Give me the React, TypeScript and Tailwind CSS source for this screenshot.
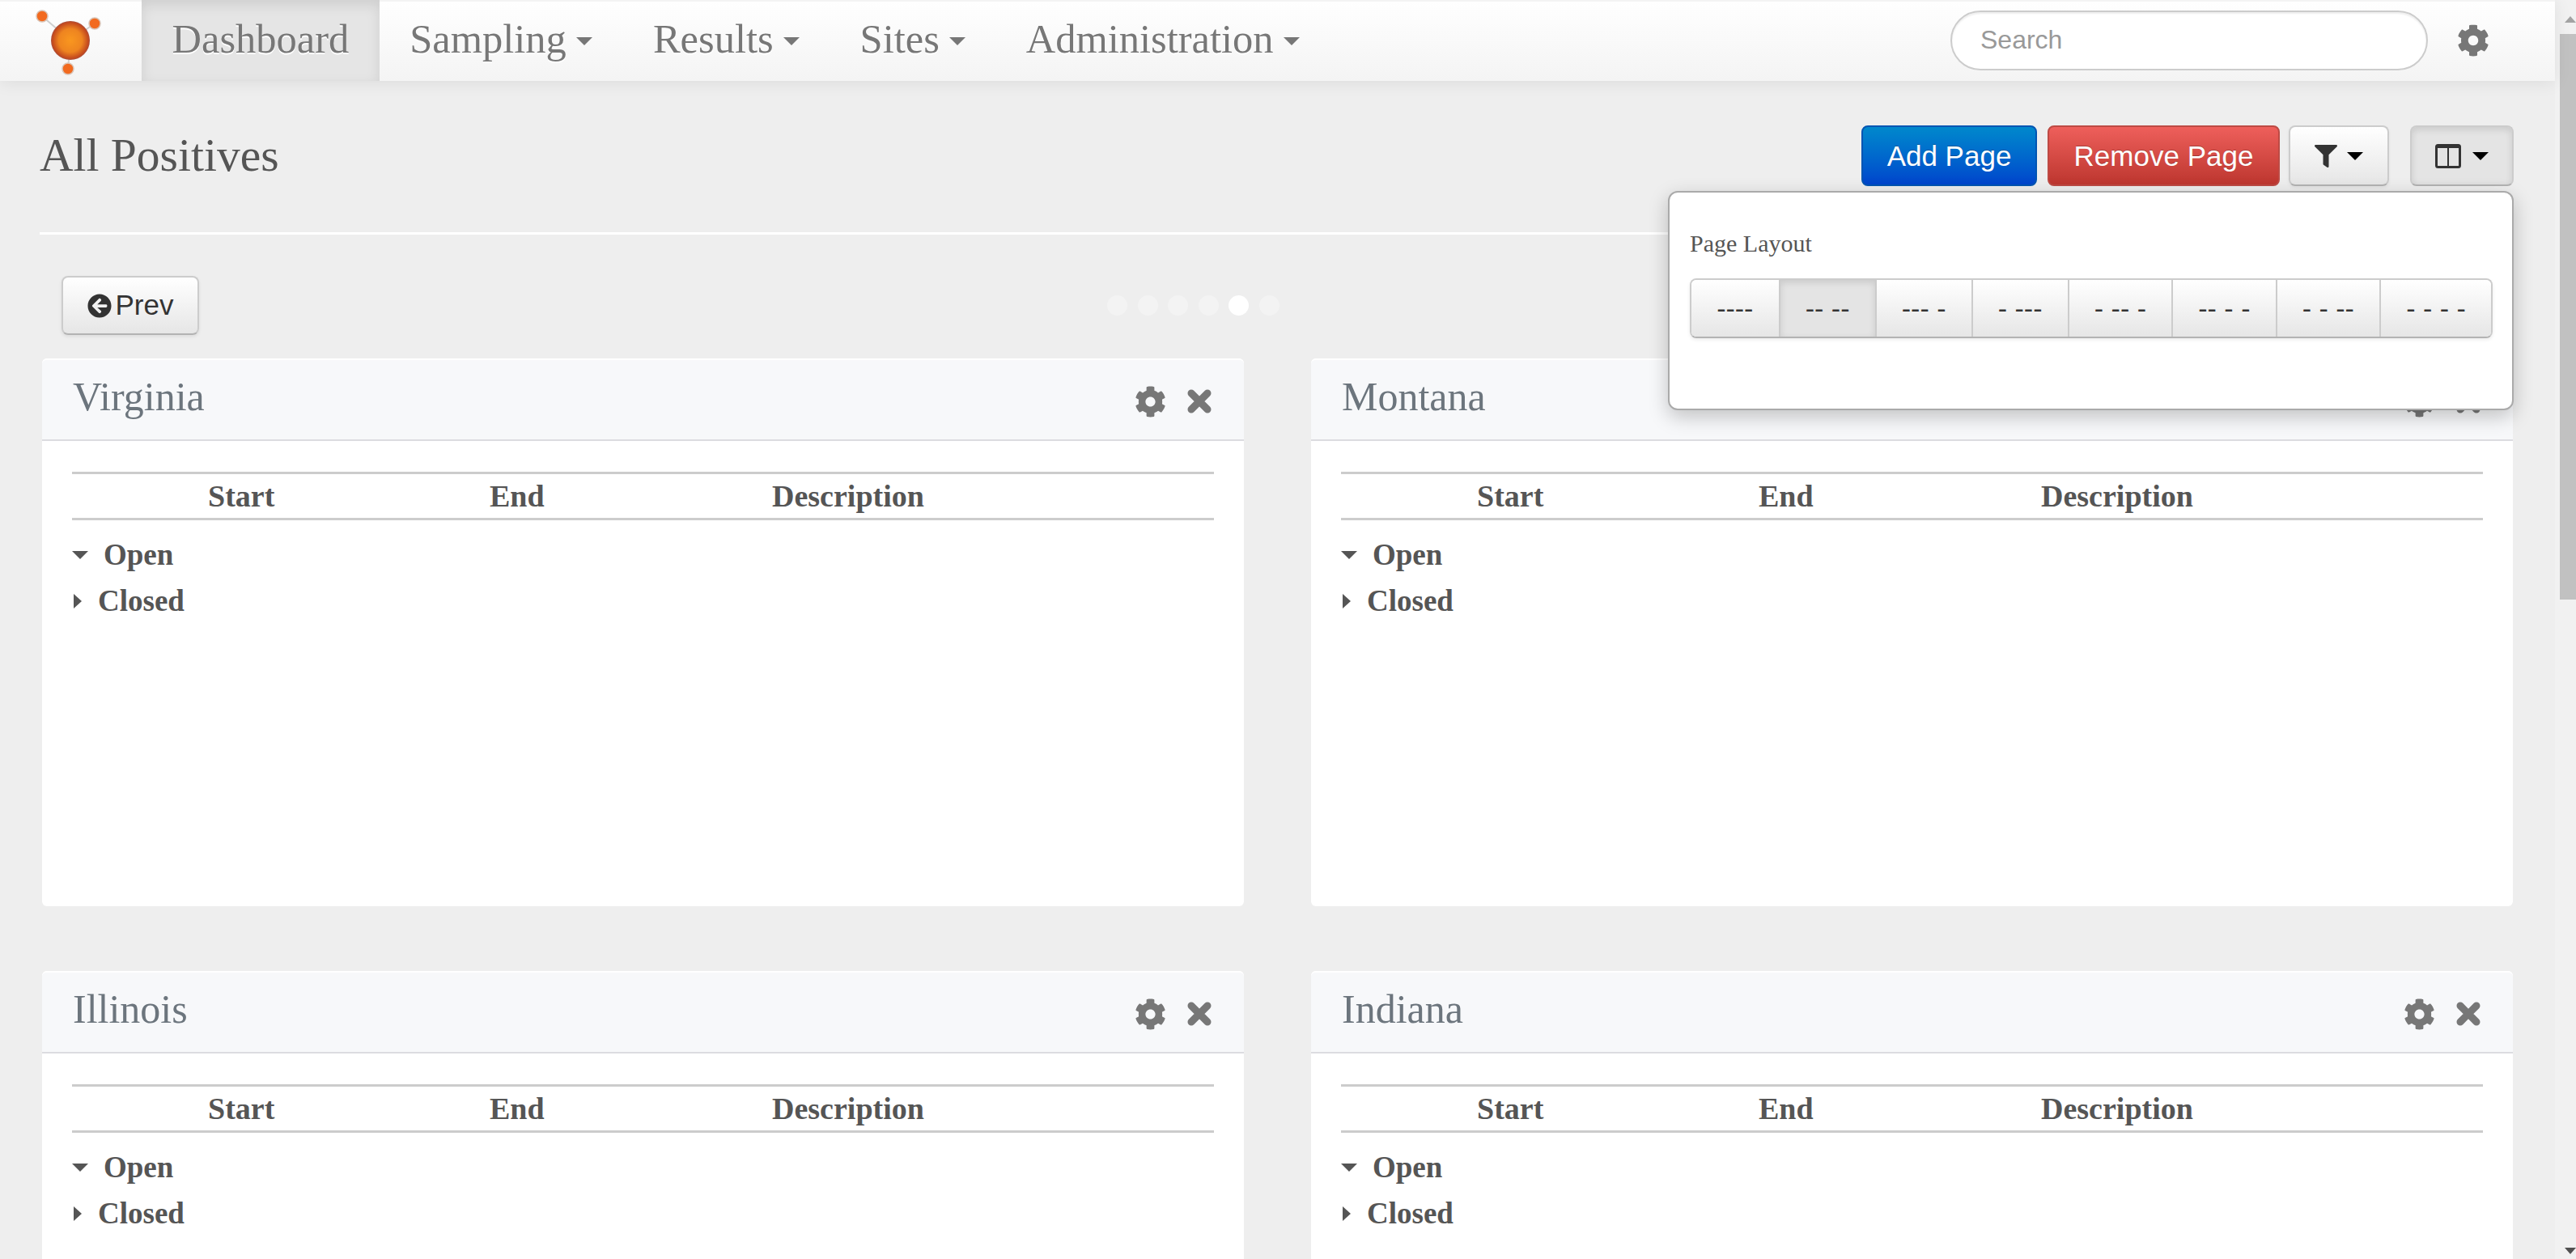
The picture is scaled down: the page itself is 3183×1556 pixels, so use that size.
import { FaArrowCircleLeft, FaCog, FaFilter } from "react-icons/fa";

const serif = "font-['Liberation_Serif',serif]";
const sans = "font-['Liberation_Sans',sans-serif]";

function Caret({ className }: { className: string }) {
  return <span className={`inline-block w-0 h-0 border-x-[10px] border-x-transparent border-t-[10px] ${className}`} />;
}

function CloseIcon() {
  return (
    <svg viewBox="0 0 30 30" className="w-[30px] h-[30px]" aria-hidden>
      <path d="M5 5 L25 25 M25 5 L5 25" stroke="currentColor" strokeWidth="9" strokeLinecap="round" />
    </svg>
  );
}

function Logo() {
  return (
    <svg viewBox="0 0 175 100" className="w-[175px] h-[100px]" aria-hidden>
      <defs>
        <radialGradient id="core">
          <stop offset="0%" stopColor="#f9971f" />
          <stop offset="60%" stopColor="#ee8420" />
          <stop offset="92%" stopColor="#c44a1e" />
          <stop offset="100%" stopColor="#a9503c" />
        </radialGradient>
      </defs>
      <path d="M52 20 L87 50 M117 29 L87 50 M84 85 L87 50" stroke="#cfcfcf" strokeWidth="2" />
      <circle cx="87" cy="50" r="24" fill="url(#core)" />
      <circle cx="52" cy="20" r="7" fill="#f26a1f" stroke="#d9c3b5" strokeWidth="1.5" />
      <circle cx="117" cy="29" r="7" fill="#f26a1f" stroke="#d9c3b5" strokeWidth="1.5" />
      <circle cx="84" cy="85" r="7" fill="#f26a1f" stroke="#d9c3b5" strokeWidth="1.5" />
    </svg>
  );
}

function NavItem({ label, menu, active }: { label: string; menu?: boolean; active?: boolean }) {
  return (
    <div
      className={`flex items-center gap-[12px] h-full pb-[3px] px-[37.5px] text-[50.5px] leading-none text-[#777] [text-shadow:0_2px_0_#fff] ${
        active ? "bg-[#e5e5e5] text-[#555] shadow-[inset_0_6px_16px_rgba(0,0,0,0.1)]" : ""
      }`}
    >
      <span>{label}</span>
      {menu && <Caret className="border-t-[#777] mt-1" />}
    </div>
  );
}

function Navbar() {
  return (
    <nav className={`${serif} relative z-10 flex items-stretch h-[100px] shrink-0 bg-gradient-to-b from-white to-[#f4f4f4] shadow-[inset_0_2px_0_#f4f4f4,0_2px_20px_rgba(0,0,0,0.08)]`}>
      <Logo />
      <NavItem label="Dashboard" active />
      <NavItem label="Sampling" menu />
      <NavItem label="Results" menu />
      <NavItem label="Sites" menu />
      <NavItem label="Administration" menu />
      <div className="flex items-center ml-auto pr-[81px]">
        <div className={`${sans} flex items-center w-[590px] h-[74px] px-[35px] pb-[2px] rounded-full border-2 border-[#ccc] bg-white text-[32px] text-[#999] shadow-[inset_0_2px_2px_rgba(0,0,0,0.07)]`}>
          Search
        </div>
        <FaCog className="ml-[36px] w-[40px] h-[40px] text-[#777]" />
      </div>
    </nav>
  );
}

function LayoutPopover() {
  const layouts = ["----", "-- --", "--- -", "- ---", "- -- -", "-- - -", "- - --", "- - - -"];
  return (
    <div className="absolute right-0 top-[81px] z-20 w-[1045px] h-[271px] pt-[43px] px-[25px] rounded-[12px] border-2 border-[#aaa] bg-white shadow-[0_8px_24px_rgba(0,0,0,0.22)]">
      <div className={`${serif} text-[30px] leading-[40px] text-[#555]`}>Page Layout</div>
      <div className={`${sans} flex mt-[23px] w-fit h-[74px] rounded-[8px] border-2 border-[#ccc] border-b-[#b3b3b3] text-[34px] text-[#333] shadow-[0_2px_4px_rgba(0,0,0,0.08)]`}>
        {layouts.map((l, i) => (
          <div
            key={l}
            className={`flex items-center px-[31.15px] whitespace-pre border-r-2 last:border-r-0 border-[#ccc] first:rounded-l-[6px] last:rounded-r-[6px] ${
              i === 1 ? "bg-[#e4e4e4] shadow-[inset_0_3px_8px_rgba(0,0,0,0.12)]" : "bg-gradient-to-b from-white to-[#e6e6e6]"
            }`}
          >
            {l}
          </div>
        ))}
      </div>
    </div>
  );
}

function PageHeader() {
  const plain = "flex items-center justify-center h-[75px] rounded-[8px] border-2 border-[#ccc] border-b-[#b3b3b3] shadow-[0_2px_4px_rgba(0,0,0,0.06)]";
  return (
    <header className="relative flex items-start h-[135px] ml-[49px] mr-[51px] border-b-[3px] border-b-white">
      <h1 className={`${serif} text-[57.5px] leading-[80px] text-[#555] -mt-[3px]`}>All Positives</h1>
      <div className={`${sans} flex items-start ml-auto text-[35px] leading-none`}>
        <button className="flex items-center justify-center w-[217px] h-[75px] rounded-[8px] border-2 border-[#0055b3] bg-gradient-to-b from-[#0088cc] to-[#0044cc] text-white [text-shadow:0_-1px_0_rgba(0,0,0,0.25)]">
          Add Page
        </button>
        <button className="flex items-center justify-center w-[287px] h-[75px] ml-[13px] rounded-[8px] border-2 border-[#bd4a44] bg-gradient-to-b from-[#ee5f5b] to-[#bd362f] text-white [text-shadow:0_-1px_0_rgba(0,0,0,0.25)]">
          Remove Page
        </button>
        <button className={`${plain} w-[124px] ml-[11px] gap-[12px] bg-gradient-to-b from-white to-[#e6e6e6]`}>
          <FaFilter className="w-[28px] h-[28px] text-[#333]" />
          <Caret className="border-t-black" />
        </button>
        <button className={`${plain} w-[128px] ml-[26px] gap-[14px] bg-[#e4e4e4] shadow-[inset_0_3px_8px_rgba(0,0,0,0.12)]`}>
          <svg viewBox="0 0 32 32" className="w-[32px] h-[32px]" aria-hidden>
            <rect x="1.5" y="2.5" width="29" height="27" rx="2" fill="none" stroke="#333" strokeWidth="3" />
            <rect x="1.5" y="2" width="29" height="4" fill="#333" />
            <rect x="15" y="3" width="2" height="26" fill="#333" />
          </svg>
          <Caret className="border-t-black" />
        </button>
      </div>
      <LayoutPopover />
    </header>
  );
}

function Pager() {
  const dots = [0, 1, 2, 3, 4, 5];
  return (
    <div className="flex items-center h-[73px] mt-[51px] mb-[29px] ml-[76px]">
      <button className={`${sans} flex items-center justify-center gap-[5px] w-[170px] h-[73px] rounded-[8px] border-2 border-[#ccc] border-b-[#b3b3b3] bg-gradient-to-b from-white to-[#e6e6e6] text-[35px] text-[#333] shadow-[0_2px_4px_rgba(0,0,0,0.08)]`}>
        <FaArrowCircleLeft className="w-[30px] h-[30px] text-[#333]" />
        Prev
      </button>
      <div className="flex gap-[12.5px] ml-[1122px]">
        {dots.map((d) => (
          <span key={d} className={`w-[25px] h-[25px] rounded-full ${d === 4 ? "bg-white" : "bg-[#f3f3f3]"}`} />
        ))}
      </div>
    </div>
  );
}

function SitePanel({ name }: { name: string }) {
  return (
    <section className={`${serif} h-[677px] rounded-[6px] bg-white`}>
      <div className="flex items-center justify-between h-[102px] pl-[38px] pr-[40px] rounded-t-[6px] border-b-2 border-b-[#dcdce0] border-t-2 border-t-white bg-[#f7f8fa]">
        <h2 className="text-[50px] leading-none text-[#6c757d] -mt-[8px]">{name}</h2>
        <div className="flex items-center gap-[26px] mt-[4px] text-[#777]">
          <FaCog className="w-[39px] h-[39px]" />
          <CloseIcon />
        </div>
      </div>
      <div className="px-[37px] pt-[38px] text-[#555] font-bold">
        <div className="grid grid-cols-[516px_349px_1fr] items-center h-[60px] border-y-[3px] border-[#ccc] text-[38px] leading-none">
          <div className="pl-[168px]">Start</div>
          <div>End</div>
          <div>Description</div>
        </div>
        <div className="flex items-center h-[57px] mt-[14px] text-[37px] leading-none">
          <Caret className="border-t-[#555]" />
          <span className="ml-[19px]">Open</span>
        </div>
        <div className="flex items-center h-[57px] text-[37px] leading-none">
          <span className="ml-[2px] w-0 h-0 border-y-[9px] border-y-transparent border-l-[10px] border-l-[#555]" />
          <span className="ml-[20px]">Closed</span>
        </div>
      </div>
    </section>
  );
}

function Scrollbar() {
  return (
    <aside className="flex flex-col items-end w-[26px] shrink-0 bg-[#f1f1f1]">
      <div className="flex justify-end items-start w-full h-[42px] pt-[20px]">
        <span className="w-0 h-0 mr-0 border-x-[7px] border-x-transparent border-b-[8px] border-b-[#a3a3a3]" />
      </div>
      <div className="w-[20px] h-[699px] bg-[#c1c1c1]" />
      <div className="flex justify-end items-end w-full flex-1 pb-[6px]">
        <span className="w-0 h-0 border-x-[7px] border-x-transparent border-t-[8px] border-t-[#505050]" />
      </div>
    </aside>
  );
}

export default function App() {
  const sites = ["Virginia", "Montana", "Illinois", "Indiana"];
  return (
    <div className="flex w-[3183px] h-[1556px] overflow-hidden bg-[#eee]">
      <main className="flex flex-col flex-1 min-w-0">
        <Navbar />
        <div className="pt-[55px]">
          <PageHeader />
          <Pager />
          <div className="grid grid-cols-2 gap-x-[83px] gap-y-[80px] px-[52px]">
            {sites.map((s) => (
              <SitePanel key={s} name={s} />
            ))}
          </div>
        </div>
      </main>
      <Scrollbar />
    </div>
  );
}
